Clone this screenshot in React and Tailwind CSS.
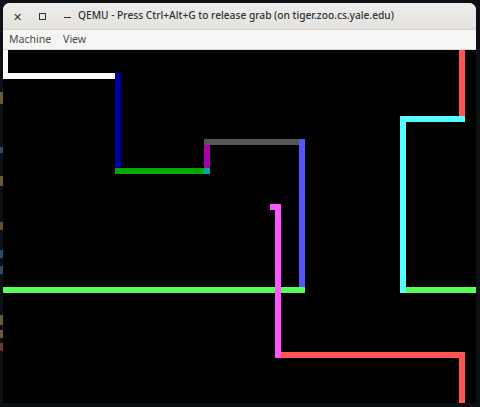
import React from "react";

function Canvas() {
  return (
    <svg width="473" height="353" viewBox="0 0 473 353" className="block">
      <rect x="0" y="0" width="473" height="353" fill="#000" />
      <rect x="0" y="0" width="5" height="29" fill="#fafafa" />
      <rect x="0" y="23" width="118" height="6" fill="#fafafa" />
      <rect x="112" y="23" width="6" height="101" fill="#0000aa" />
      <rect x="112" y="118" width="95" height="6" fill="#00aa00" />
      <rect x="201" y="89" width="101" height="6" fill="#555555" />
      <rect x="201" y="95" width="6" height="23" fill="#aa00aa" />
      <rect x="201" y="118" width="6" height="6" fill="#00aaaa" />
      <rect x="296" y="89" width="6" height="154" fill="#5555ff" />
      <rect x="0" y="237" width="302" height="6" fill="#55ff55" />
      <rect x="267" y="154" width="11" height="6" fill="#ff55ff" />
      <rect x="272" y="154" width="6" height="154" fill="#ff55ff" />
      <rect x="278" y="302" width="184" height="6" fill="#ff5555" />
      <rect x="456" y="302" width="6" height="60" fill="#ff5555" />
      <rect x="456" y="0" width="6" height="72" fill="#ff5555" />
      <rect x="397" y="66" width="65" height="6" fill="#55ffff" />
      <rect x="397" y="66" width="6" height="177" fill="#55ffff" />
      <rect x="403" y="237" width="70" height="6" fill="#55ff55" />
    </svg>
  );
}

export default function App() {
  return (
    <div className="w-[480px] h-[407px] bg-[#0c0f13] overflow-hidden pt-[3px] pl-[3px] relative">
      <div className="absolute left-0 top-[92px] w-[3px] h-[12px] bg-[#c9a25a] opacity-50" />
      <div className="absolute left-0 top-[147px] w-[3px] h-[6px] bg-[#4a8ab8] opacity-50" />
      <div className="absolute left-0 top-[176px] w-[3px] h-[10px] bg-[#c9a25a] opacity-50" />
      <div className="absolute left-0 top-[222px] w-[3px] h-[8px] bg-[#c98a4a] opacity-50" />
      <div className="absolute left-0 top-[250px] w-[3px] h-[8px] bg-[#4a8ab8] opacity-50" />
      <div className="absolute left-0 top-[266px] w-[3px] h-[8px] bg-[#4a8ab8] opacity-50" />
      <div className="absolute left-0 top-[315px] w-[3px] h-[10px] bg-[#c9a25a] opacity-50" />
      <div className="absolute left-0 top-[330px] w-[3px] h-[8px] bg-[#c9a25a] opacity-50" />
      <div className="absolute left-0 top-[343px] w-[3px] h-[8px] bg-[#c9603a] opacity-50" />
      <div className="w-[473px] flex flex-col rounded-t-[7px] overflow-hidden bg-[#f6f5f4]" style={{ fontFamily: '"Noto Sans", "Open Sans", sans-serif' }}>
        <div className="h-[27px] flex items-center bg-gradient-to-b from-[#eeedeb] to-[#e4e2df] text-[#2e3436] border-b border-[#d8d4d0]">
          <span className="w-[26px] ml-[1px] text-center text-[11px] leading-none">✕</span>
          <span className="w-[24px] flex justify-center">
            <span className="block w-[7px] h-[7px] border-[1.5px] border-[#2e3436]" />
          </span>
          <span className="w-[7px] ml-[10px] h-[1.5px] bg-[#2e3436] mt-[3px]" />
          <span className="ml-[7px] text-[10.2px] font-medium whitespace-nowrap">QEMU - Press Ctrl+Alt+G to release grab (on tiger.zoo.cs.yale.edu)</span>
        </div>
        <div className="h-[20px] flex items-center text-[10.5px] text-[#4a4a4a] bg-[#f6f5f4] border-b border-[#dcd9d6]">
          <span className="ml-[6px] mt-[1px]">Machine</span>
          <span className="ml-[12px] mt-[1px]">View</span>
        </div>
        <Canvas />
      </div>
    </div>
  );
}
